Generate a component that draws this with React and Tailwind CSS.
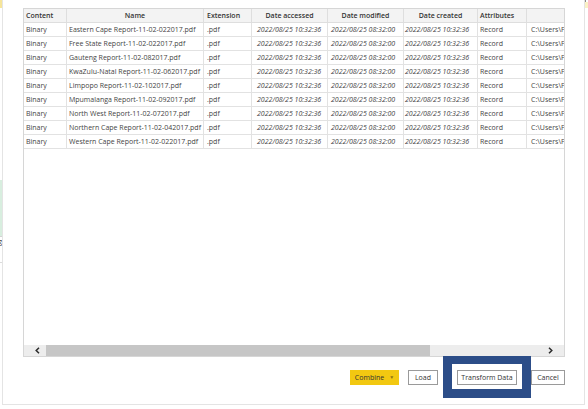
const files = [
  "Eastern Cape Report-11-02-022017.pdf",
  "Free State Report-11-02-022017.pdf",
  "Gauteng Report-11-02-082017.pdf",
  "KwaZulu-Natal Report-11-02-062017.pdf",
  "Limpopo Report-11-02-102017.pdf",
  "Mpumalanga Report-11-02-092017.pdf",
  "North West Report-11-02-072017.pdf",
  "Northern Cape Report-11-02-042017.pdf",
  "Western Cape Report-11-02-022017.pdf",
];

function Chevron({ dir }) {
  return (
    <svg width="5" height="7" viewBox="0 0 5 7">
      {dir === "left" ? (
        <polyline points="4,0.8 1.2,3.5 4,6.2" fill="none" stroke="#2b2b2b" strokeWidth="1.5" />
      ) : (
        <polyline points="1,0.8 3.8,3.5 1,6.2" fill="none" stroke="#2b2b2b" strokeWidth="1.5" />
      )}
    </svg>
  );
}

export default function App() {
  return (
    <div
      className="w-[588px] h-[409px] bg-white flex overflow-hidden text-[7px] text-[#444]"
      style={{ fontFamily: '"Open Sans", "Noto Sans", sans-serif' }}
    >
      {/* app behind the dialog, left edge */}
      <div className="w-[2px] shrink-0 flex flex-col overflow-hidden">
        <div className="h-[8px] bg-[#f6e59a]" />
        <div className="h-[172px]" />
        <div className="h-[56px] bg-[#d8eedf]" />
        <div className="h-px bg-[#d4d4d4]" />
        <div className="h-[8px] flex justify-end items-center text-[7px] leading-none text-[#333]">
          <span>g</span>
        </div>
        <div className="h-[17px]" />
        <div className="h-px bg-[#dcdcdc]" />
      </div>

      {/* DIALOG */}
      <div className="w-[583px] h-[405px] shrink-0 border-l border-r border-b border-[#e4e4e4] pl-[20px] pt-[8px] flex flex-col">
        {/* TABLE */}
        <div className="w-[542px] h-[349px] border border-[#d6d6d6] flex flex-col overflow-hidden">
          <div className="flex-1 overflow-hidden">
            {/* header */}
            <div className="flex h-[14px] bg-[#f3f3f3] border-b border-[#dedede] font-semibold text-[#333] leading-[13px] whitespace-nowrap">
              <div className="w-[43px] shrink-0 border-r border-[#dedede] pl-[2px]">Content</div>
              <div className="w-[137px] shrink-0 border-r border-[#dedede] text-center">Name</div>
              <div className="w-[48px] shrink-0 border-r border-[#dedede] pl-[3px]">Extension</div>
              <div className="w-[76px] shrink-0 border-r border-[#dedede] text-center">Date accessed</div>
              <div className="w-[76px] shrink-0 border-r border-[#dedede] text-center">Date modified</div>
              <div className="w-[74px] shrink-0 border-r border-[#dedede] text-center">Date created</div>
              <div className="w-[49px] shrink-0 border-r border-[#dedede] pl-[2px]">Attributes</div>
              <div className="w-[60px] shrink-0" />
            </div>

            {/* rows */}
            {files.map((name) => (
              <div
                key={name}
                className="flex h-[14px] border-b border-[#e2e2e2] leading-[13px] whitespace-nowrap"
              >
                <div className="w-[43px] shrink-0 border-r border-[#e2e2e2] pl-[2px]">Binary</div>
                <div className="w-[137px] shrink-0 border-r border-[#e2e2e2] pl-[2px] overflow-hidden">{name}</div>
                <div className="w-[48px] shrink-0 border-r border-[#e2e2e2] pl-[3px]">.pdf</div>
                <div className="w-[76px] shrink-0 border-r border-[#e2e2e2] pl-[5px] italic">2022/08/25 10:32:36</div>
                <div className="w-[76px] shrink-0 border-r border-[#e2e2e2] pl-[3px] italic">2022/08/25 08:32:00</div>
                <div className="w-[74px] shrink-0 border-r border-[#e2e2e2] pl-[1px] italic">2022/08/25 10:32:36</div>
                <div className="w-[49px] shrink-0 border-r border-[#e2e2e2] pl-[2px]">Record</div>
                <div className="w-[60px] shrink-0 pl-[4px]">C:\Users\Fred\Documents</div>
              </div>
            ))}
          </div>

          {/* horizontal scrollbar */}
          <div className="h-[11px] shrink-0 flex bg-[#ededed]">
            <div className="w-[22px] flex items-center justify-end pr-[6px]">
              <Chevron dir="left" />
            </div>
            <div className="w-[384px] bg-[#c6c6c6]" />
            <div className="flex-1 flex items-center justify-end pr-[11px]">
              <Chevron dir="right" />
            </div>
          </div>
        </div>

        {/* BUTTONS */}
        <div className="w-[542px] -mt-px flex items-center justify-end text-[#333]">
          <button className="w-[49px] h-[15px] bg-[#f2c811] flex items-center justify-center gap-[5px] leading-none">
            <span>Combine</span>
            <span className="text-[5px] text-[#8c7414]">▼</span>
          </button>
          <button className="ml-[9px] w-[30px] h-[15px] bg-white border border-[#9a9a9a] leading-none">
            Load
          </button>
          <div className="ml-[5px] border-x-[9px] border-t-[8px] border-b-[9px] border-[#2c4d88] bg-white pl-[5px] pr-[5px] pt-[6px] pb-[4px]">
            <button className="w-[60px] h-[15px] bg-white border border-[#9a9a9a] leading-none">
              Transform Data
            </button>
          </div>
          <button className="w-[34px] h-[15px] bg-white border border-[#9a9a9a] leading-none">
            Cancel
          </button>
        </div>
      </div>

      {/* app behind the dialog, right edge */}
      <div className="w-[3px] shrink-0 flex flex-col">
        <div className="h-[2px] bg-[#8a8a8a] w-[1px]" />
        <div className="h-[6px] bg-[#faf1c4]" />
      </div>
    </div>
  );
}
